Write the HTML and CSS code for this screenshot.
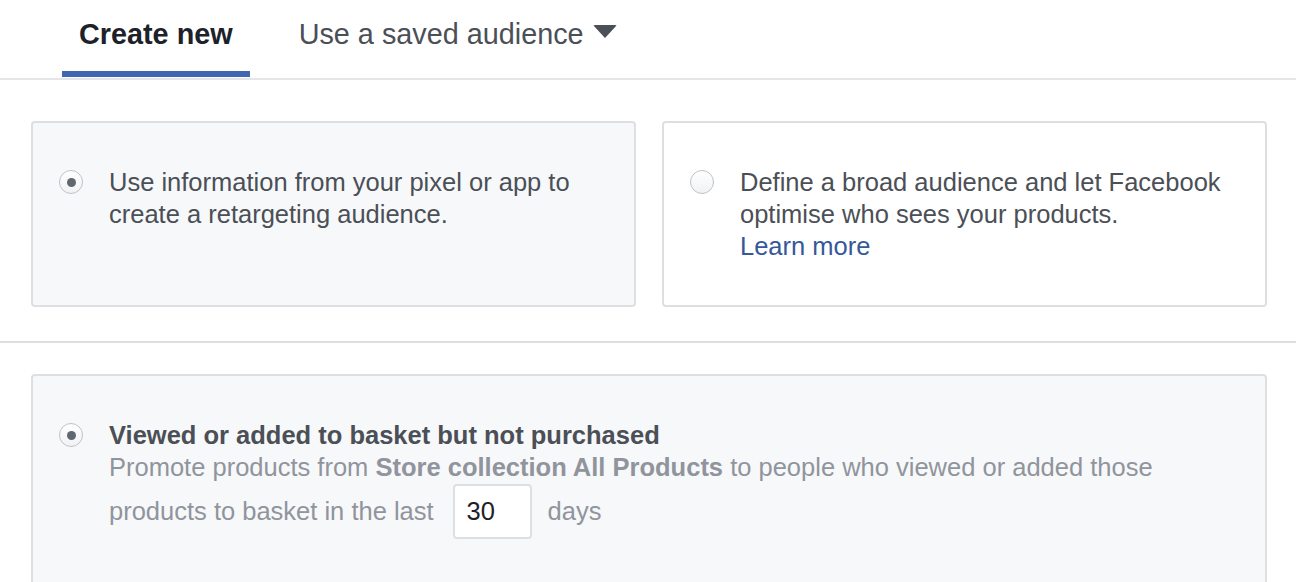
FILE: index.html
```html
<!DOCTYPE html>
<html>
<head>
<meta charset="utf-8">
<link rel="stylesheet" href="styles.css">
</head>
<body>
<div class="tabs">
  <div class="tab active">Create new</div>
  <div class="tab">Use a saved audience<span class="caret"></span></div>
</div>
<div class="section">
  <div class="card grey">
    <span class="radio checked"></span>
    <div class="text">Use information from your pixel or app to<br>create a retargeting audience.</div>
  </div>
  <div class="card white">
    <span class="radio"></span>
    <div class="text">Define a broad audience and let Facebook<br>optimise who sees your products.<br><a class="link" href="#">Learn more</a></div>
  </div>
</div>
<div class="section2">
  <div class="card grey wide">
    <span class="radio checked"></span>
    <div class="text">
      <div class="title">Viewed or added to basket but not purchased</div>
      <div class="desc">Promote products from <b>Store collection All Products</b> to people who viewed or added those</div>
      <div class="desc row">products to basket in the last <span class="input">30</span> days</div>
    </div>
  </div>
</div>
</body>
</html>
```
FILE: styles.css
```css
html, body { margin: 0; padding: 0; background: #fff; }
body { font-family: "Liberation Sans", Arial, sans-serif; color: #4b4f56; overflow: hidden; height: 582px; }
.tabs { display: flex; height: 78px; border-bottom: 2px solid #e5e6e9; padding-left: 62px; box-sizing: content-box; }
.tab { font-size: 28.8px; color: #4b4f56; padding: 18px 17px 0; height: 53px; box-sizing: content-box; margin-right: 32px; display: flex; align-items: flex-start; border-bottom: 6px solid transparent; }
.tab.active { font-weight: bold; color: #1d2129; border-bottom-color: #4267b2; }
.caret { display: inline-block; width: 0; height: 0; border-left: 12px solid transparent; border-right: 12px solid transparent; border-top: 13px solid #4b4f56; margin-left: 9px; margin-top: 7px; border-radius: 2px; }
.section { display: flex; gap: 26px; padding: 41px 29px 34px 31px; border-bottom: 2px solid #dddfe2; }
.card { border: 2px solid #dddfe2; border-radius: 4px; box-sizing: border-box; display: flex; align-items: flex-start; padding: 43px 26px 0 26px; font-size: 25.5px; line-height: 32px; }
.card.grey { background: #f7f8fa; }
.card.white { background: #fff; }
.section .card { width: 606px; height: 186px; }
.section2 { padding: 31px 29px 0 31px; }
.card.wide { width: 100%; height: 240px; }
.radio { flex: none; width: 24px; height: 24px; border-radius: 50%; border: 1px solid #bec2c9; background: linear-gradient(#fff, #f1f2f4); box-sizing: border-box; margin-top: 4px; margin-right: 26px; position: relative; }
.radio.checked::after { content: ""; position: absolute; left: 7px; top: 7px; width: 9px; height: 9px; border-radius: 50%; background: #606770; }
.text { color: #4b4f56; }
.link { color: #365899; text-decoration: none; }
.title { font-weight: bold; }
.desc { color: #90949c; }
.desc b { color: #90949c; }
.row { display: flex; align-items: center; height: 56px; margin-top: 0; }
.input { display: inline-flex; align-items: center; width: 79px; height: 55px; box-sizing: border-box; border: 2px solid #dddfe2; border-radius: 4px; background: #fff; color: #1d2129; padding-left: 12px; margin: 0 16px 0 19px; }
```
